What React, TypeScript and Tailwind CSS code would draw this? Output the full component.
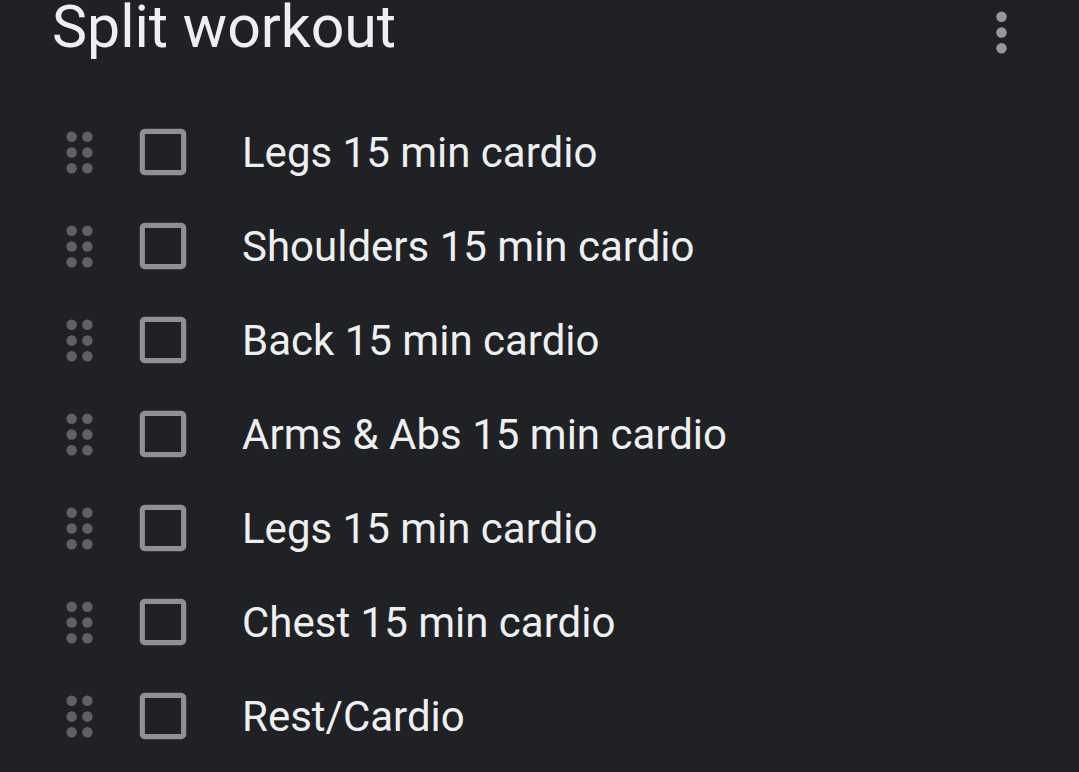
const tasks = [
  'Legs 15 min cardio',
  'Shoulders 15 min cardio',
  'Back 15 min cardio',
  'Arms & Abs 15 min cardio',
  'Legs 15 min cardio',
  'Chest 15 min cardio',
  'Rest/Cardio',
]

function DragHandle() {
  return (
    <svg viewBox="0 0 24 24" className="w-[63px] h-[63px] shrink-0" fill="#5f6166">
      <circle cx="9" cy="6" r="2" />
      <circle cx="15" cy="6" r="2" />
      <circle cx="9" cy="12" r="2" />
      <circle cx="15" cy="12" r="2" />
      <circle cx="9" cy="18" r="2" />
      <circle cx="15" cy="18" r="2" />
    </svg>
  )
}

function CheckboxBlank() {
  return (
    <svg viewBox="0 0 24 24" className="w-[62px] h-[62px] shrink-0" fill="#8f9095">
      <path d="M19 5v14H5V5h14m0-2H5c-1.1 0-2 .9-2 2v14c0 1.1.9 2 2 2h14c1.1 0 2-.9 2-2V5c0-1.1-.9-2-2-2z" />
    </svg>
  )
}

function MoreVert() {
  return (
    <svg viewBox="0 0 24 24" className="w-[63px] h-[63px]" fill="#97989c">
      <circle cx="12" cy="6" r="2" />
      <circle cx="12" cy="12" r="2" />
      <circle cx="12" cy="18" r="2" />
    </svg>
  )
}

export default function App() {
  return (
    <div
      className="w-full h-[772px] bg-[#202124] overflow-hidden"
      style={{ fontFamily: 'Roboto, "Noto Sans", sans-serif' }}
    >
      {/* Header */}
      <div className="h-[105px] flex items-start justify-between pl-[52px] pr-[46px]">
        <h1 className="text-[59px] leading-[54px] font-normal text-[#eeeff1]">Split workout</h1>
        <button className="mt-[1px]">
          <MoreVert />
        </button>
      </div>

      {/* Tasks */}
      <div className="flex flex-col">
        {tasks.map((task, i) => (
          <div key={i} className="h-[94px] flex items-center pl-[48px]">
            <DragHandle />
            <div className="ml-[21px]">
              <CheckboxBlank />
            </div>
            <span className="ml-[48px] pt-[2px] text-[42px] leading-none text-[#eeeff1] whitespace-nowrap">
              {task}
            </span>
          </div>
        ))}
      </div>
    </div>
  )
}
